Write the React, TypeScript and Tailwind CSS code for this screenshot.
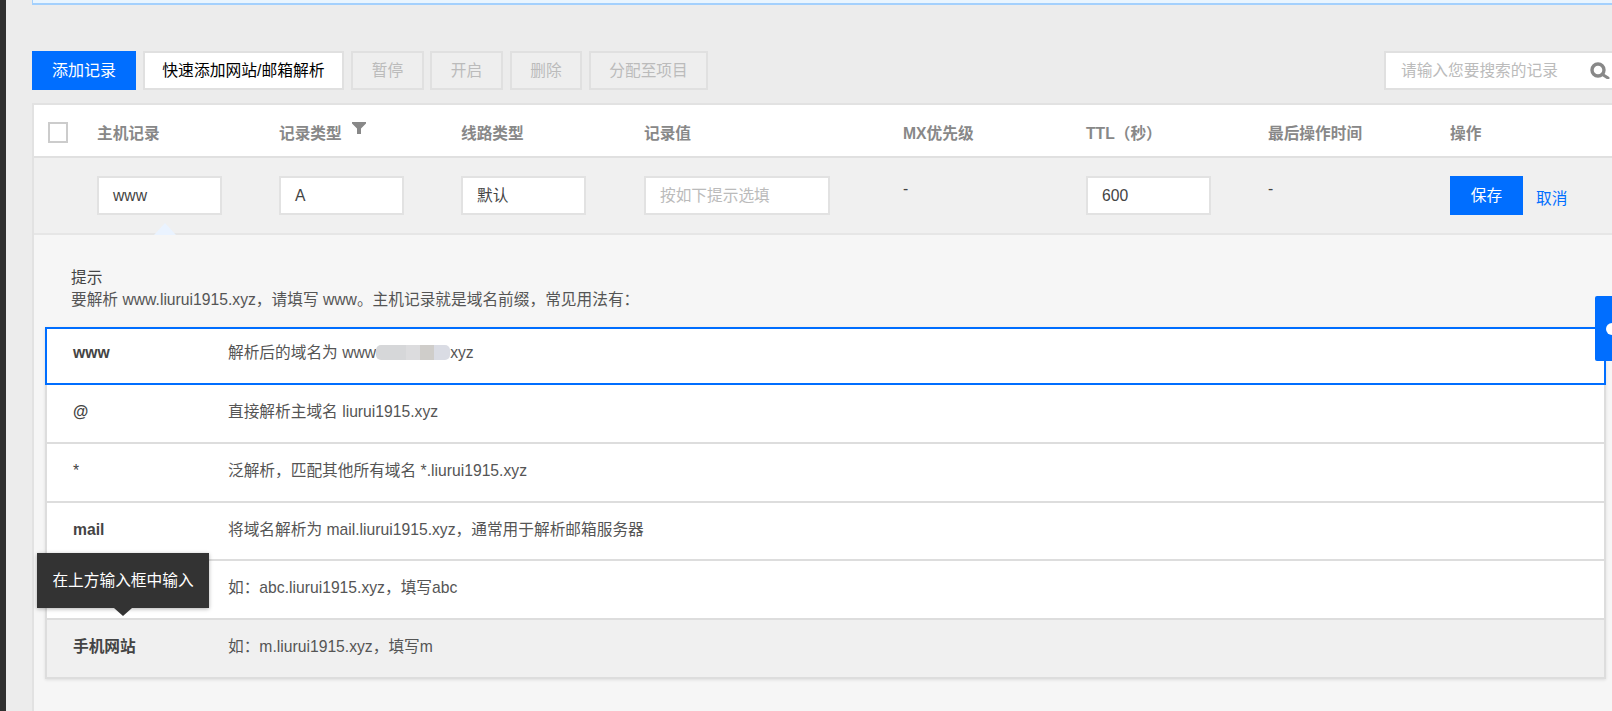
import React from "react";

const rows = [
  { k: "www", d: <>解析后的域名为 www<span className="inline-flex h-[15px] w-[74px] align-[-2px] overflow-hidden rounded-[5px]"><i className="w-[30px] bg-[#d6d7d9]" /><i className="w-[14px] bg-[#dcdcde]" /><i className="w-[14px] bg-[#cfcdca]" /><i className="w-[16px] bg-[#dadce4]" /></span>xyz</>, active: true },
  { k: "@", d: "直接解析主域名 liurui1915.xyz" },
  { k: "*", d: "泛解析，匹配其他所有域名 *.liurui1915.xyz", plain: true },
  { k: "mail", d: "将域名解析为 mail.liurui1915.xyz，通常用于解析邮箱服务器" },
  { k: "", d: "如：abc.liurui1915.xyz，填写abc" },
  { k: "手机网站", d: "如：m.liurui1915.xyz，填写m", hover: true },
];

const Off = ({ children, w }: { children: React.ReactNode; w: string }) => (
  <div className={`${w} flex h-[39px] items-center justify-center border-2 border-[#e0e0e0] bg-[#eeeeee] text-[15.7px] text-[#bbbbbb]`}>{children}</div>
);

const Field = ({ children, w = "w-[125px]", muted = false }: { children: React.ReactNode; w?: string; muted?: boolean }) => (
  <div className={`${w} flex h-[39px] items-center border-2 border-[#e2e2e2] bg-white pl-[14px] text-[15.7px] ${muted ? "text-[#bbbbbb]" : "text-[#444444]"}`}>{children}</div>
);

export default function App() {
  return (
    <div className="relative flex h-[711px] w-[1612px] overflow-hidden bg-[#ececec] font-['Liberation_Sans','Noto_Sans_CJK_SC',sans-serif]">
      <div className="w-[6px] shrink-0 bg-[#2f2f2f]" />
      <div className="ml-[26px] flex min-w-0 flex-1 flex-col">
        <div className="h-[5px] shrink-0 border-b-2 border-l border-[#a3d0fd] bg-[#e9f5ff]" />

        <div className="mt-[46px] flex h-[39px] shrink-0 items-center">
          <div className="flex h-[39px] w-[104px] items-center justify-center bg-[#006eff] text-[16px] text-white">添加记录</div>
          <div className="ml-[7px] flex h-[39px] w-[201px] items-center justify-center border-2 border-[#e0e0e0] bg-white text-[15.8px] text-black">快速添加网站/邮箱解析</div>
          <div className="ml-[7px] flex">
            <Off w="w-[73px]">暂停</Off>
            <div className="ml-[6px]"><Off w="w-[73px]">开启</Off></div>
            <div className="ml-[7px]"><Off w="w-[72px]">删除</Off></div>
            <div className="ml-[7px]"><Off w="w-[119px]">分配至项目</Off></div>
          </div>
          <div className="ml-auto flex h-[39px] w-[228px] items-center border-2 border-r-0 border-[#e0e0e0] bg-white pl-[15px] text-[15.7px] text-[#bbbbbb]">
            请输入您要搜索的记录
            <svg viewBox="0 0 20 17" className="ml-[32px] h-[17px] w-[20px]" fill="none" stroke="#888888">
              <circle cx="8" cy="8" r="6" strokeWidth="3.4" />
              <path d="M12.5 12.5 18 16" strokeLinecap="round" strokeWidth="3" />
            </svg>
          </div>
        </div>

        <div className="mt-[13px] flex min-h-0 flex-1 flex-col border-l-2 border-t-2 border-[#e2e2e2] bg-[#f6f6f6]">
          <div className="grid h-[53px] shrink-0 grid-cols-[63px_182px_182px_183px_259px_183px_182px_182px_1fr] items-center border-b-2 border-[#e0e0e0] bg-white pt-[7px] text-[15.7px] font-bold text-[#888888]">
            <div className="pl-[14px]"><div className="mt-[-4px] h-[21px] w-[20px] border-2 border-[#cccccc] bg-white" /></div>
            <div>主机记录</div>
            <div className="flex items-start">记录类型
              <svg viewBox="0 0 14 12" className="ml-[10px] mt-[0px] h-[12px] w-[14px]" fill="#888888"><path d="M0 0h14v1.5L9 6.5V12H5V6.5L0 1.5z" /></svg>
            </div>
            <div>线路类型</div>
            <div>记录值</div>
            <div>MX优先级</div>
            <div>TTL（秒）</div>
            <div>最后操作时间</div>
            <div>操作</div>
          </div>

          <div className="relative grid h-[77px] shrink-0 grid-cols-[63px_182px_182px_183px_259px_183px_182px_182px_1fr] border-b-2 border-[#e6e6e6] bg-[#f0f0f0] pt-[18px] text-[15.7px]">
            <div />
            <Field>www</Field>
            <Field>A</Field>
            <Field>默认</Field>
            <Field w="w-[186px]" muted>按如下提示选填</Field>
            <div className="pt-[1px] text-[#444444]">-</div>
            <Field>600</Field>
            <div className="pt-[1px] text-[#444444]">-</div>
            <div className="flex items-start">
              <div className="flex h-[39px] w-[73px] items-center justify-center bg-[#006eff] text-white">保存</div>
              <div className="ml-[13px] mt-[11px] text-[#006eff]">取消</div>
            </div>
            <div className="absolute bottom-[-2px] left-[120px] h-0 w-0 border-x-[11px] border-b-[12px] border-x-transparent border-b-[#eaf3ff]" />
          </div>

          <div className="flex flex-col pt-[32px] text-[15.7px] leading-[22px] text-[#555555]">
            <div className="pl-[37px]">
              <div className="text-[#444444]">提示</div>
              <div>要解析 www.liurui1915.xyz，请填写 www。主机记录就是域名前缀，常见用法有：</div>
            </div>
            <div className="ml-[11px] mr-[6px] mt-[15.7px] shadow-[0_1px_3px_rgba(0,0,0,0.1)]">
              {rows.map((r, i) => (
                <div
                  key={i}
                  className={`flex h-[58.7px] border-x-2 ${r.active ? "border-2 border-[#006eff] bg-white pt-[13.3px]" : r.hover ? "border-b-2 border-[#dddddd] bg-[#f0f0f0] pt-[16px]" : "border-b-2 border-[#dddddd] bg-white pt-[16px]"}`}
                >
                  <div className={`w-[181px] shrink-0 pl-[26px] ${r.plain ? "font-normal" : "font-bold"} text-[#444444]`}>{r.k}</div>
                  <div>{r.d}</div>
                </div>
              ))}
            </div>
          </div>
        </div>
      </div>

      <div className="absolute left-[37px] top-[553px] flex h-[55px] w-[172px] items-center justify-center bg-[#333333] text-[15.7px] text-white shadow-[0_1px_4px_rgba(0,0,0,0.3)]">
        在上方输入框中输入
        <div className="absolute left-[77px] top-[55px] h-0 w-0 border-x-[9px] border-t-[8px] border-x-transparent border-t-[#333333]" />
      </div>

      <div className="absolute left-[1595px] top-[296px] flex h-[65px] w-[17px] items-center rounded-l-[2px] bg-[#006eff]">
        <div className="ml-[11px] h-[12px] w-[12px] shrink-0 rounded-full bg-white" />
      </div>
    </div>
  );
}
